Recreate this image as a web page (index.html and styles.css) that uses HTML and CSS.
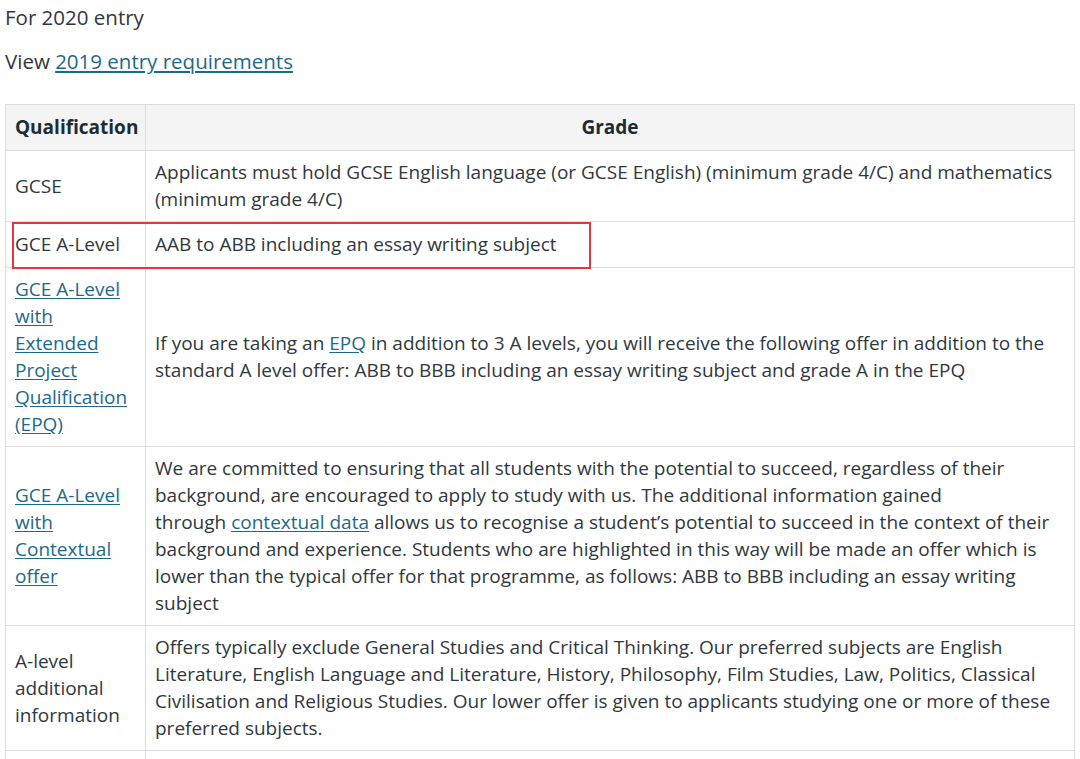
FILE: index.html
```html
<!DOCTYPE html>
<html>
<head>
<meta charset="utf-8">
<link rel="stylesheet" href="styles.css">
</head>
<body>
<div class="page">
  <p class="entry">For 2020 entry</p>
  <p class="view">View <a href="#">2019 entry requirements</a></p>
  <table class="req">
    <thead>
      <tr class="single"><th class="qual">Qualification</th><th class="grade">Grade</th></tr>
    </thead>
    <tbody>
      <tr>
        <td class="qual">GCSE</td>
        <td>Applicants must hold GCSE English language (or GCSE English) (minimum grade 4/C) and mathematics (minimum grade 4/C)</td>
      </tr>
      <tr class="single">
        <td class="qual hl-cell">GCE A-Level<span class="highlight"></span></td>
        <td>AAB to ABB including an essay writing subject</td>
      </tr>
      <tr>
        <td class="qual"><a href="#">GCE A-Level with Extended Project Qualification (EPQ)</a></td>
        <td>If you are taking an <a href="#">EPQ</a> in addition to 3 A levels, you will receive the following offer in addition to the standard A level offer: ABB to BBB including an essay writing subject and grade A in the EPQ</td>
      </tr>
      <tr>
        <td class="qual"><a href="#">GCE A-Level with Contextual offer</a></td>
        <td>We are committed to ensuring that all students with the potential to succeed, regardless of their background, are encouraged to apply to study with us. The additional information gained through&nbsp;<a href="#">contextual data</a> allows us to recognise a student’s potential to succeed in the context of their background and experience. Students who are highlighted in this way will be made an offer which is lower than the typical offer for that programme, as follows: ABB to BBB including an essay writing subject</td>
      </tr>
      <tr>
        <td class="qual">A-level additional information</td>
        <td>Offers typically exclude General Studies and Critical Thinking. Our preferred subjects are English Literature, English Language and Literature, History, Philosophy, Film Studies, Law, Politics, Classical Civilisation and Religious Studies. Our lower offer is given to applicants studying one or more of these preferred subjects.</td>
      </tr>
      <tr class="single">
        <td class="qual">&nbsp;</td>
        <td>&nbsp;</td>
      </tr>
    </tbody>
  </table>
</div>
</body>
</html>
```
FILE: styles.css
```css
html, body {
  margin: 0;
  padding: 0;
  background: #ffffff;
}
body {
  font-family: "Open Sans", "Noto Sans", sans-serif;
  font-size: 19px;
  line-height: 27px;
  color: #2f383e;
}
.page {
  padding: 4px 5px 0 5px;
}
.entry {
  margin: 0;
  font-size: 20.5px;
  line-height: 27px;
}
.view {
  margin: 17px 0 0 0;
  font-size: 20.5px;
  line-height: 27px;
}
a {
  color: #1c6a8a;
  text-decoration: underline;
  text-underline-offset: 2px;
}
.req {
  margin-top: 29px;
  width: 1070px;
  border-collapse: collapse;
  table-layout: fixed;
}
.req th, .req td {
  border: 1px solid #dddddd;
  padding: 8px 9px 8px 9px;
  text-align: left;
  vertical-align: middle;
}
.req tr.single th, .req tr.single td {
  padding-top: 9px;
  padding-bottom: 9px;
}
.req th {
  background: #f4f4f4;
  font-weight: 700;
  color: #1d2b36;
}
.req th.grade {
  text-align: center;
}
.req .qual {
  width: 121px;
}
.hl-cell {
  position: relative;
}
.highlight {
  position: absolute;
  left: 6px;
  top: 0;
  width: 575px;
  height: 43px;
  border: 2px solid #e2383d;
  pointer-events: none;
}
```
